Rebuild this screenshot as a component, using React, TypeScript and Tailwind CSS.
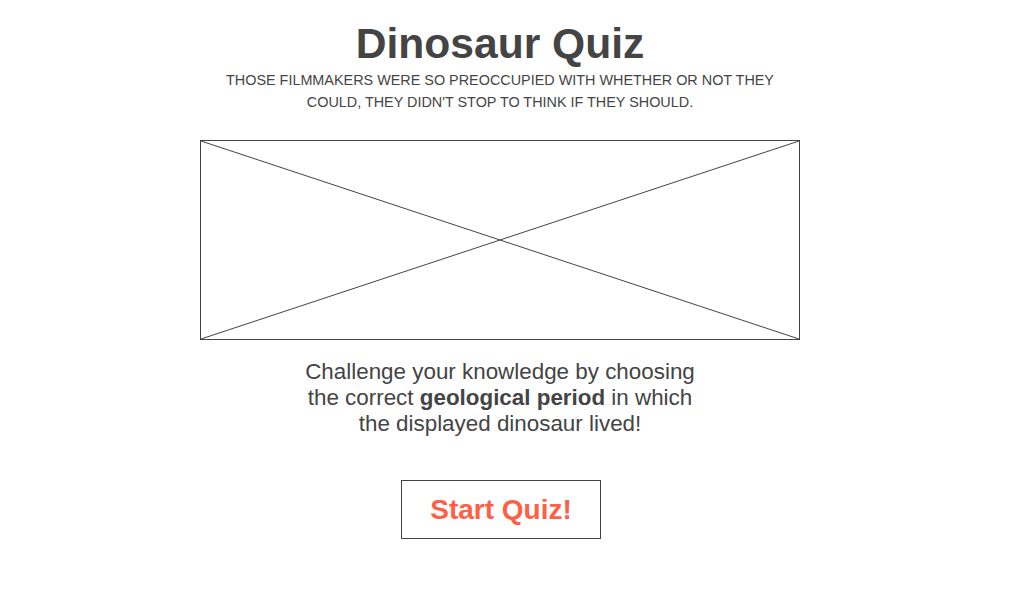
export default function App() {
  return (
    <div className="min-h-screen bg-white text-[#444]" style={{ fontFamily: '"Liberation Sans", Arial, sans-serif' }}>
      <div className="w-[1000px] flex flex-col items-center">
        <h1 className="mt-[17px] text-[42.6px] font-bold leading-[52px]">Dinosaur Quiz</h1>
        <p className="w-[560px] text-center text-[14.4px] leading-[22px] uppercase">
          Those filmmakers were so preoccupied with whether or not they could, they didn't stop to think if they should.
        </p>
        <div className="mt-[27px] w-[600px] h-[200px] border border-[#444]">
          <svg width="598" height="198" viewBox="0 0 598 198" preserveAspectRatio="none" className="block">
            <line x1="0" y1="0" x2="598" y2="198" stroke="#444" strokeWidth="1" />
            <line x1="598" y1="0" x2="0" y2="198" stroke="#444" strokeWidth="1" />
          </svg>
        </div>
        <p className="mt-[19px] w-[400px] text-center text-[22.4px] leading-[26px]">
          Challenge your knowledge by choosing the correct <b>geological period</b> in which the displayed dinosaur lived!
        </p>
        <button className="mt-[43px] ml-[2px] w-[200px] h-[59px] border border-[#444] text-[#ff5f45] text-[28px] font-bold">
          Start Quiz!
        </button>
      </div>
    </div>
  );
}
